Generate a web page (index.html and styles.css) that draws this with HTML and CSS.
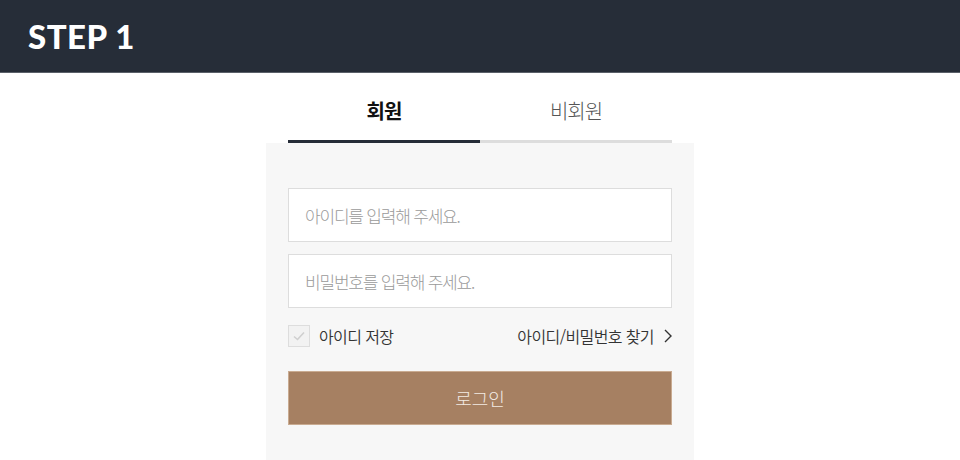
FILE: index.html
```html
<!DOCTYPE html>
<html lang="ko">
<head>
  <meta charset="UTF-8" />
  <meta name="viewport" content="width=device-width, initial-scale=1.0" />
  <title>Login</title>
  <link rel="stylesheet" href="styles.css">
</head>
<body>

<!-- Step Header -->
<header class="step-header">
  <h1>STEP 1</h1>
</header>

<div class="login-wrap">
  <!-- Member Tabs -->
  <ul class="login-tabs">
    <li class="tab active"><a href="#">회원</a></li>
    <li class="tab"><a href="#">비회원</a></li>
  </ul>

  <!-- Login Form -->
  <form class="login-box">
    <input type="text" class="login-input" placeholder="아이디를 입력해 주세요." />
    <input type="password" class="login-input" placeholder="비밀번호를 입력해 주세요." />

    <div class="login-options">
      <label class="save-id">
        <span class="check-box">
          <svg width="14" height="12" viewBox="0 0 14 12"><path d="M2 6.5 L5.5 9.5 L12 2.5" fill="none" stroke="#cfcfcf" stroke-width="1.6"/></svg>
        </span>
        아이디 저장
      </label>
      <a href="#" class="find-link">
        아이디/비밀번호 찾기
        <svg width="8" height="14" viewBox="0 0 8 14"><path d="M1 1 L7 7 L1 13" fill="none" stroke="#333" stroke-width="1.4"/></svg>
      </a>
    </div>

    <button type="button" class="login-btn">로그인</button>
  </form>
</div>

</body>
</html>
```

FILE: styles.css
```css
/* General Styling */
body {
  margin: 0;
  font-family: "Noto Sans CJK KR", "Noto Sans", sans-serif;
  background-color: #ffffff;
  color: #333333;
}

/* Header */
.step-header {
  height: 72px;
  background-color: #262d38;
  border-bottom: 1px solid #5a6069;
  display: flex;
  align-items: center;
  padding-left: 28px;
}

.step-header h1 {
  margin: 0;
  color: #ffffff;
  font-family: "Lato", "Open Sans", sans-serif;
  font-weight: 900;
  font-size: 33px;
  letter-spacing: 0.5px;
}

/* Wrapper */
.login-wrap {
  width: 428px;
  margin: 0 auto;
}

/* Tabs */
.login-tabs {
  list-style: none;
  margin: 0 22px;
  padding: 0;
  display: flex;
}

.tab {
  flex: 1;
  text-align: center;
  border-bottom: 3px solid #dddddd;
}

.tab a {
  display: block;
  padding: 23px 0 14px;
  line-height: 30px;
  font-size: 20px;
  font-weight: 300;
  letter-spacing: -1px;
  color: #555555;
  text-decoration: none;
}

.tab.active {
  border-bottom-color: #262d38;
}

.tab.active a {
  color: #111111;
  font-weight: 700;
}

/* Form Box */
.login-box {
  background-color: #f7f7f7;
  padding: 45px 22px 35px;
  display: flex;
  flex-direction: column;
}

.login-input {
  height: 54px;
  box-sizing: border-box;
  border: 1px solid #dddddd;
  background: #ffffff;
  padding: 0 16px;
  font-family: "Noto Sans CJK KR", sans-serif;
  font-size: 17px;
  font-weight: 300;
  letter-spacing: -1.2px;
  color: #333;
  margin-bottom: 12px;
  outline: none;
}

.login-input::placeholder {
  color: #9a9a9a;
  letter-spacing: -1.2px;
}

/* Options Row */
.login-options {
  display: flex;
  justify-content: space-between;
  align-items: center;
  margin-top: 5px;
  height: 22px;
}

.save-id {
  display: flex;
  align-items: center;
  gap: 9px;
  font-size: 16px;
  font-weight: 350;
  letter-spacing: -0.6px;
  color: #333;
}

.check-box {
  width: 22px;
  height: 22px;
  box-sizing: border-box;
  border: 1px solid #dddddd;
  background: #f2f2f2;
  display: flex;
  align-items: center;
  justify-content: center;
}

.find-link {
  display: flex;
  align-items: center;
  gap: 10px;
  font-size: 16px;
  font-weight: 350;
  letter-spacing: -0.6px;
  color: #333;
  text-decoration: none;
}

/* Login Button */
.login-btn {
  margin-top: 24px;
  height: 54px;
  border: 1px solid #c9ab91;
  background-color: #a68062;
  color: #f3ebe4;
  font-family: inherit;
  font-size: 18px;
  font-weight: 300;
  cursor: pointer;
}
```
